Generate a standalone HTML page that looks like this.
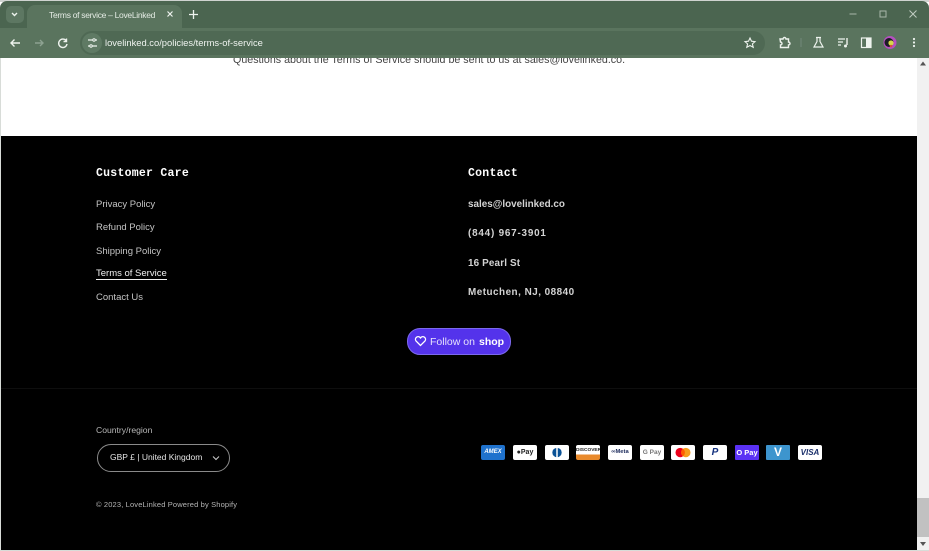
<!DOCTYPE html>
<html lang="en"><head><meta charset="utf-8"><title>Terms of service – LoveLinked</title>
<style>
html,body{margin:0;padding:0;width:929px;height:551px;overflow:hidden;background:#fff;font-family:"Liberation Sans",sans-serif}
.a{position:absolute;white-space:nowrap}
#frame{left:0;top:1px;width:929px;height:28px;background:#4b6550;border-radius:7px 7px 0 0}
#top{left:0;top:0;width:929px;height:2px;background:#cfd3d0}
#toolbar{left:0;top:28px;width:929px;height:30px;background:#5a745e}
#tab{left:27px;top:5px;width:155px;height:24px;background:#5a745e;border-radius:8px 8px 0 0}
#tabs{left:6px;top:6px;width:18px;height:17px;background:#5d7762;border-radius:5px}
#url{left:80px;top:31px;width:685px;height:24px;border-radius:12px;background:#4f6954}
#site{left:82px;top:33px;width:20px;height:20px;border-radius:10px;background:#5f7a64}
#foot{left:1px;top:136px;width:916px;height:415px;background:#000}
#sb{left:917px;top:58px;width:12px;height:493px;background:#f1f1f1}
#th{left:917px;top:498px;width:12px;height:39px;background:#c1c1c1}
.h{font-family:"Liberation Mono",monospace;font-weight:bold;font-size:11.5px;color:#fff;letter-spacing:.25px}
.l{font-size:9.5px;color:#c4c4c4}
.c{font-size:9.9px;font-weight:bold;color:#d4d4d4}
.p{top:445px;width:24px;height:15px;border-radius:2px;background:#fff;font-size:6.5px;line-height:15px;text-align:center;color:#222;overflow:hidden}
.p svg{display:block}
</style></head><body>
<div class="a" id="top"></div>
<div class="a" id="frame"></div>
<div class="a" id="toolbar"></div>
<div class="a" id="tabs"></div>
<div class="a" id="tab"></div>
<div class="a" style="left:49px;top:9px;font-size:8.5px;line-height:12px;letter-spacing:-.3px;color:#e4ebe4">Terms of service – LoveLinked</div>
<div class="a" id="url"></div>
<div class="a" id="site"></div>
<div class="a" style="left:105px;top:37px;font-size:9.4px;line-height:12px;color:#f0f4f0">lovelinked.co/policies/terms-of-service</div>

<svg class="a" style="left:0;top:0" width="929" height="58" fill="none" stroke="#eef3ee" stroke-width="1.4">
<path d="M12 13l2.5 2.5L17 13"/>
<path d="M167.500 11.500l5 5m0-5l-5 5" stroke-width="1.2"/>
<path d="M189 14.500h9m-4.500-4.500v9" stroke-width="1.300"/>
<path d="M20 43h-9m3.500-3.500L11 43l3.500 3.500"/>
<path d="M35 43h8m-3-3l3 3-3 3" stroke="#8da291"/>
<path d="M66 40.500a4.200 4.200 0 1 0 1 3.500M66.500 38.500v3h-3"/>
<path d="M88 40h5m2 0h2M88 46h2m2 0h5" stroke-width="1.200"/><circle cx="94" cy="40" r="1.200" stroke-width="1"/><circle cx="91" cy="46" r="1.200" stroke-width="1"/>
<path d="M750 38l1.500 3.200 3.500.4-2.600 2.300.8 3.400-3.200-1.800-3.200 1.800.8-3.400-2.600-2.300 3.500-.4z" stroke-width="1.100"/>
<path d="M780 39h3a1.500 1.500 0 0 1 3 0h2.500v3a1.500 1.500 0 0 1 0 3v2.500H780.500v-2.500a1.500 1.500 0 0 0 0-3z"/>
<path d="M801 38v9" stroke="#71897a" stroke-width="1"/>
<path d="M816 37.500h5m-4 .5v3.500l-3 5.500h9l-3-5.500V38" stroke-width="1.200"/>
<path d="M838 39h7M838 42h5M838 45h3" stroke-width="1.300"/><path d="M847 38v7" stroke-width="1.400"/><circle cx="845.500" cy="46" r="1.500" fill="#eef3ee" stroke="none"/>
<rect x="861.500" y="38" width="9.500" height="9.500" stroke-width="1.200"/><rect x="866" y="38" width="5" height="9.500" fill="#eef3ee" stroke="none"/>
<circle cx="890" cy="42.500" r="6.500" fill="#b44fc0" stroke="none"/><circle cx="889" cy="42.500" r="4.500" fill="#1c1c24" stroke="none"/><circle cx="891" cy="43" r="2.600" fill="#d5d84a" stroke="none"/><circle cx="891" cy="46" r="1.300" fill="#d8503c" stroke="none"/>
<circle cx="914" cy="39" r="1.100" fill="#eef3ee" stroke="none"/><circle cx="914" cy="42.500" r="1.100" fill="#eef3ee" stroke="none"/><circle cx="914" cy="46" r="1.100" fill="#eef3ee" stroke="none"/>
<path d="M849.500 14h7" stroke="#a8b8aa" stroke-width="1"/>
<rect x="880" y="11" width="6" height="6" stroke="#a8b8aa" stroke-width="1"/>
<path d="M909.500 10.500l7 7m0-7l-7 7" stroke="#c0ccc2" stroke-width="1"/>
</svg>

<div style="position:absolute;left:0;top:58px;width:917px;height:78px;overflow:hidden">
<div class="a" style="left:233px;top:-5px;font-size:10.7px;line-height:14px;color:#444">Questions about the Terms of Service should be sent to us at sales@lovelinked.co.</div>
</div>

<div class="a" id="foot"></div>
<div class="a" style="left:1px;top:388px;width:916px;height:1px;background:#0e0e0e"></div>

<div class="a h" style="left:96px;top:166px;line-height:15px">Customer Care</div>
<div class="a l" style="left:96px;top:198px;line-height:14px">Privacy Policy</div>
<div class="a l" style="left:96px;top:221px;line-height:14px">Refund Policy</div>
<div class="a l" style="left:96px;top:245px;line-height:14px">Shipping Policy</div>
<div class="a l" style="left:96px;top:267px;line-height:14px;color:#f0f0f0">Terms of Service</div>
<div class="a" style="left:96px;top:279px;width:71px;height:1px;background:#f0f0f0"></div>
<div class="a l" style="left:96px;top:291px;line-height:14px">Contact Us</div>

<div class="a h" style="left:468px;top:166px;line-height:15px">Contact</div>
<div class="a c" style="left:468px;top:198px;line-height:14px">sales@lovelinked.co</div>
<div class="a c" style="left:468px;top:227px;line-height:14px;letter-spacing:.8px">(844) 967-3901</div>
<div class="a c" style="left:468px;top:257px;line-height:14px;letter-spacing:.15px">16 Pearl St</div>
<div class="a c" style="left:468px;top:286px;line-height:14px;letter-spacing:.5px">Metuchen, NJ, 08840</div>

<div class="a" style="left:407px;top:328px;width:102px;height:25px;border-radius:13px;background:#5433eb;border:1px solid #7c69ee"></div>
<svg class="a" style="left:414px;top:335px" width="13" height="12" fill="none" stroke="#fff" stroke-width="1.300"><path d="M6.500 10.500L2 6a2.700 2.700 0 0 1 4-3.600l.5.600.5-.6A2.700 2.700 0 0 1 11 6z"/></svg>
<div class="a" style="left:430px;top:335px;font-size:10.500px;line-height:14px;color:#e6e2fb">Follow on</div>
<div class="a" style="left:479px;top:335px;font-size:10.500px;line-height:14px;font-weight:bold;color:#fff">shop</div>

<div class="a l" style="left:96px;top:424px;font-size:8.600px;line-height:13px;color:#b8b8b8">Country/region</div>
<div class="a" style="left:97px;top:444px;width:131px;height:26px;border:1px solid #8a8a8a;border-radius:14px"></div>
<div class="a" style="left:110px;top:451px;font-size:8.500px;line-height:13px;color:#e4e4e4">GBP £ | United Kingdom</div>
<svg class="a" style="left:212px;top:455px" width="8" height="6" fill="none" stroke="#ccc"><path d="M1 1.500l3 3 3-3"/></svg>
<div class="a" style="left:96px;top:499px;font-size:7.500px;line-height:12px;color:#b5b5b5;letter-spacing:.15px">© 2023, LoveLinked Powered by Shopify</div>

<div class="a p" style="left:481px;background:#1f72cd;color:#fff;font-weight:bold;font-style:italic;font-size:6px">AMEX</div>
<div class="a p" style="left:513px;font-weight:bold;font-size:7px">●Pay</div>
<div class="a p" style="left:544.500px"><svg width="24" height="15" viewBox="0 0 25 16"><circle cx="12.500" cy="8" r="5" fill="#0a5296"/><rect x="11.700" y="2" width="1.600" height="12" fill="#fff"/></svg></div>
<div class="a p" style="left:576px;font-size:4.800px;font-weight:bold;background:linear-gradient(#fff 62%,#e98a2c 62%);line-height:12px">DISCOVER</div>
<div class="a p" style="left:608px;font-size:5.800px;color:#1c2b5c;font-weight:bold">∞Meta</div>
<div class="a p" style="left:640px;color:#777;font-size:6.500px;font-weight:bold">G Pay</div>
<div class="a p" style="left:671px"><svg width="24" height="15" viewBox="0 0 25 16"><circle cx="9.500" cy="8" r="5" fill="#eb001b"/><circle cx="15.500" cy="8" r="5" fill="#f79e1b"/><path d="M12.500 4a5 5 0 0 1 0 8 5 5 0 0 1 0-8z" fill="#ff5f00"/></svg></div>
<div class="a p" style="left:703px;color:#13307e;font-weight:bold;font-style:italic;font-size:10px">P</div>
<div class="a p" style="left:735px;background:#5a31f4;color:#fff;font-size:7.500px;font-weight:bold;border-radius:1px">O Pay</div>
<div class="a p" style="left:766px;background:#3d95ce;color:#fff;font-size:12px;font-weight:bold;border-radius:1px">V</div>
<div class="a p" style="left:798px;color:#1a2f6b;font-weight:bold;font-style:italic;font-size:8px">VISA</div>

<div class="a" id="sb"></div>
<div class="a" id="th"></div>
<svg class="a" style="left:917px;top:58px" width="12" height="493" fill="#555"><path d="M6 3.500l3 4H3z"/><path d="M6 488l3-4H3z"/></svg>
<div class="a" style="left:0;top:58px;width:1px;height:493px;background:#d8dcd8"></div>
<div class="a" style="left:0;top:550px;width:929px;height:1px;background:#d8dcd8"></div>
</body></html>
